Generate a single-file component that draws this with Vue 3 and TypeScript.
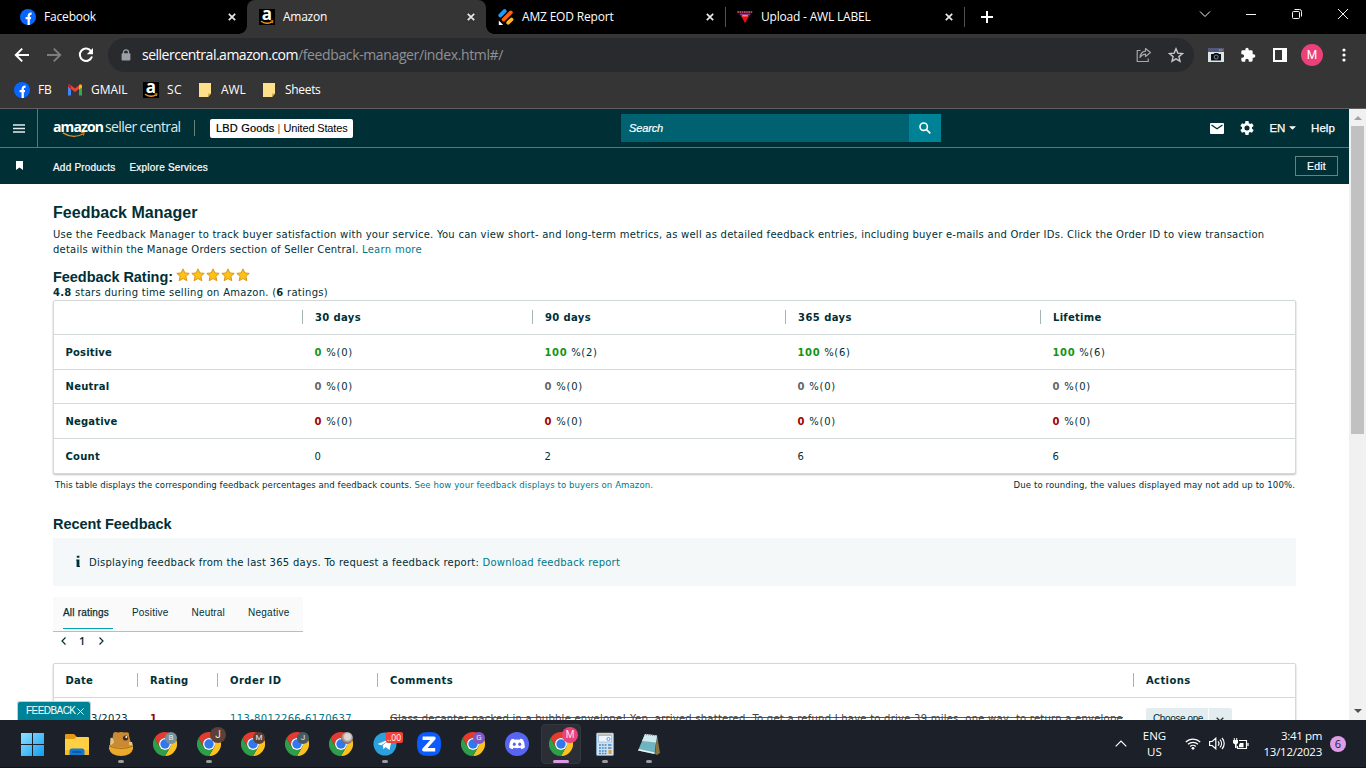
<script setup lang="ts">
import type { Directive } from 'vue'

// Tracks a single-line label so that it spans the given width in pixels.
const vFit: Directive<HTMLElement, number> = {
  mounted(el, { value }) {
    const count = (el.textContent ?? '').length
    const natural = el.getBoundingClientRect().width
    if (count > 0) el.style.letterSpacing = `${((value - natural) / count).toFixed(3)}px`
  },
}

interface Cell { value: string; rest: string; w: number }
interface MetricRow { label: string; w: number; tone: string; cells: Cell[] }

const metricHeads = [
  { label: '30 days', w: 46 },
  { label: '90 days', w: 46 },
  { label: '365 days', w: 54 },
  { label: 'Lifetime', w: 48.5 },
]
const zero = (): Cell => ({ value: '0', rest: ' %(0)', w: 38.5 })
const metricRows: MetricRow[] = [
  {
    label: 'Positive', w: 46.5, tone: 'good',
    cells: [zero(), { value: '100', rest: ' %(2)', w: 53 }, { value: '100', rest: ' %(6)', w: 53 }, { value: '100', rest: ' %(6)', w: 53 }],
  },
  { label: 'Neutral', w: 44, tone: 'mid', cells: [zero(), zero(), zero(), zero()] },
  { label: 'Negative', w: 52, tone: 'bad', cells: [zero(), zero(), zero(), zero()] },
  {
    label: 'Count', w: 34.5, tone: 'plain',
    cells: ['0', '2', '6', '6'].map((n) => ({ value: '', rest: n, w: 7 })),
  },
]

const ratingTabs = [
  { label: 'All ratings', w: 46 },
  { label: 'Positive', w: 36.5 },
  { label: 'Neutral', w: 33.5 },
  { label: 'Negative', w: 41.5 },
]

interface TaskApp { kind: string; badge?: string; tint?: string; size?: string; dot?: boolean; active?: boolean }
const apps: TaskApp[] = [
  { kind: 'windows' },
  { kind: 'folder' },
  { kind: 'hippo', dot: true },
  { kind: 'chrome', badge: 'B', tint: 'slate' },
  { kind: 'chrome', badge: 'J', tint: 'brown', size: 'big', dot: true },
  { kind: 'chrome', badge: 'M', tint: 'brown' },
  { kind: 'chrome', badge: 'J', tint: 'steel' },
  { kind: 'chrome', badge: ' ', tint: 'photo' },
  { kind: 'telegram', dot: true },
  { kind: 'zoom' },
  { kind: 'chrome', badge: 'G', tint: 'violet' },
  { kind: 'discord' },
  { kind: 'chrome', badge: 'M', tint: 'pink', size: 'big', active: true },
  { kind: 'calc', dot: true },
  { kind: 'notepad', dot: true },
]
</script>

<template>
  <div class="screen">
    <svg class="defs" width="0" height="0">
      <symbol id="fb" viewBox="0 0 16 16">
        <circle cx="8" cy="8" r="8" fill="#0866ff" />
        <path d="M8.700 16V7q0-2.600 2.900-2.400M5.600 9.200h5.400" fill="none" stroke="#fff" stroke-width="2.300" />
      </symbol>
      <symbol id="smile" viewBox="0 0 16 16">
        <path d="M2 12.200q6 3.800 11.400.6" fill="none" stroke="#f79a1c" stroke-width="1.300" />
        <path d="M11.400 12l2.700-.3-.7 2.400" fill="none" stroke="#f79a1c" stroke-width=".9" />
      </symbol>
      <symbol id="x" viewBox="0 0 8 8">
        <path d="M.8.8l6.400 6.400M7.200.8L.8 7.200" stroke="#e8e8e8" stroke-width="1.700" />
      </symbol>
      <symbol id="note" viewBox="0 0 12 14">
        <path d="M0 0h12v10.500L9 14H0z" fill="#ffe08a" />
        <path d="M12 10.500L9 14v-3.500z" fill="#d9ae3c" />
      </symbol>
      <symbol id="star" viewBox="0 0 14 14">
        <path d="M7 .9l1.800 4 4.400.5-3.300 2.900.9 4.400L7 10.500l-3.800 2.200.9-4.400L.8 5.400l4.400-.5z" fill="#ffc20e" stroke="#d8941c" stroke-width="1" stroke-linejoin="round" />
      </symbol>
      <symbol id="chrome" viewBox="0 0 24 24">
        <path d="M1.600 6A12 12 0 0 1 22.400 6H12a6 6 0 0 0-5.200 9z" fill="#e33b2e" />
        <path d="M22.400 6A12 12 0 0 1 12 24l5.200-9A6 6 0 0 0 12 6z" fill="#fcc31e" />
        <path d="M12 24A12 12 0 0 1 1.600 6l5.200 9a6 6 0 0 0 10.400 0z" fill="#2c9f48" />
        <circle cx="12" cy="12" r="6" fill="#fff" />
        <circle cx="12" cy="12" r="4.700" fill="#3078ee" />
      </symbol>
    </svg>

    <!-- Browser tab strip -->
    <div class="strip">
      <div class="tab t1">
        <svg class="fav"><use href="#fb" /></svg>
        <span v-fit="52" class="tl">Facebook</span>
        <svg class="close"><use href="#x" /></svg>
      </div>
      <div class="tab active">
        <span class="fav amz">a<svg><use href="#smile" /></svg></span>
        <span v-fit="44" class="tl">Amazon</span>
        <svg class="close"><use href="#x" /></svg>
      </div>
      <div class="tab">
        <svg class="fav" viewBox="0 0 16 16">
          <path d="M2.400 6.400l4.200-4.200" stroke="#1a9bff" stroke-width="4" stroke-linecap="round" />
          <path d="M5.600 10.600l7.200-7.200" stroke="#ff6110" stroke-width="3.800" stroke-linecap="round" />
          <path d="M10.200 13.700l3.300-3.200" stroke="#ffb62e" stroke-width="3.800" stroke-linecap="round" />
          <path d="M.8 11.500l4.400 4.500H.8z" fill="#fff" />
        </svg>
        <span v-fit="91.500" class="tl">AMZ EOD Report</span>
        <svg class="close"><use href="#x" /></svg>
      </div>
      <div class="tab ruled">
        <svg class="fav" viewBox="0 0 16 16">
          <path d="M0 2.500h16L8.300 14z" fill="#2a1020" />
          <path d="M.4 3h15.200" stroke="#e2556c" stroke-width="1.600" stroke-dasharray="1.600 .6" />
          <path d="M3 5.400h10" stroke="#8b3e8e" stroke-width="1.400" />
          <path d="M4 6.500h8L8 14z" fill="#f20d0d" />
          <path d="M5.200 6.800h5.600" stroke="#f4c9d6" stroke-width="1" />
        </svg>
        <span v-fit="109.500" class="tl">Upload - AWL LABEL</span>
        <svg class="close"><use href="#x" /></svg>
      </div>
      <div class="newtab">
        <svg width="12" height="12"><path d="M6 0v12M0 6h12" stroke="#fff" stroke-width="2" /></svg>
      </div>
      <div class="winbtns">
        <svg viewBox="0 0 12 12"><path d="M1 3.500l5 5 5-5" /></svg>
        <svg viewBox="0 0 12 12"><path d="M1 6.500h10" /></svg>
        <svg viewBox="0 0 12 12"><rect x="1.500" y="3.500" width="7" height="7" rx="1" /><path d="M3.500 1.500h5a2 2 0 0 1 2 2v5" /></svg>
        <svg viewBox="0 0 12 12"><path d="M1 1l10 10M11 1L1 11" /></svg>
      </div>
    </div>

    <!-- Address bar -->
    <div class="toolbar">
      <svg class="nav n1" viewBox="0 0 16 16"><path d="M15 8H2M8.200 1.600L1.800 8l6.400 6.400" /></svg>
      <svg class="nav n2" viewBox="0 0 16 16"><path d="M1 8h13M7.800 1.600L14.200 8l-6.400 6.400" /></svg>
      <svg class="nav n3" viewBox="0 0 16 16"><path d="M13.200 4.200A6.200 6.200 0 1 0 14 9.500" /><path class="fill" d="M15 1v6.200H8.800z" /></svg>
      <div class="omni">
        <svg class="lock" viewBox="0 0 10 12"><path d="M2.500 5V3a2.500 2.200 0 0 1 5 0v2" fill="none" stroke="#9aa0a6" stroke-width="1.300" /><rect x=".6" y="4.200" width="8.800" height="7.400" rx="1" fill="#9aa0a6" /></svg>
        <span class="url"><span v-fit="156" class="host">sellercentral.amazon.com</span><span v-fit="205" class="path">/feedback-manager/index.html#/</span></span>
        <svg class="share" viewBox="0 0 16 16"><path d="M4.500 3.500H1.200v11h11V11.500M9.500 1.500l5 4-5 4V7.200Q6 7.200 4 10.500q.5-5.700 5.500-6.300z" /></svg>
        <svg class="fave" viewBox="0 0 16 16"><path d="M8 1.800l1.800 4.300 4.700.4-3.600 3.100 1.100 4.600L8 11.800l-4 2.400 1.100-4.600L1.500 6.500l4.700-.4z" /></svg>
      </div>
      <svg class="ext cam" viewBox="0 0 16 14"><rect width="16" height="14" fill="#dbe6e8" /><rect width="16" height="4" fill="#55587a" /><path d="M11 1h1.500v2H11z" fill="#3cb0a0" /><path d="M13 1h1.500v2H13z" fill="#e1523d" /><path d="M3 6h2.500l1-1h3.500l1 1h2v6.500H3z" fill="#0c1215" /><circle cx="8.200" cy="9" r="2" fill="none" stroke="#9ba7aa" stroke-width=".8" /></svg>
      <svg class="ext puz" viewBox="0 0 24 24"><path fill="#fff" d="M20.500 11H19V7a2 2 0 0 0-2-2h-4V3.500a2.500 2.500 0 0 0-5 0V5H4a2 2 0 0 0-2 2v3.800h1.500a2.700 2.700 0 0 1 0 5.400H2V20a2 2 0 0 0 2 2h3.800v-1.500a2.700 2.700 0 0 1 5.400 0V22H17a2 2 0 0 0 2-2v-4h1.500a2.500 2.500 0 0 0 0-5z" /></svg>
      <svg class="ext side" viewBox="0 0 14 14"><path fill="#fff" fill-rule="evenodd" d="M0 0h14v14H0zM2 2v10h7V2z" /></svg>
      <span class="avatar">M</span>
      <svg class="dots" viewBox="0 0 4 14"><circle cx="2" cy="2" r="1.600" /><circle cx="2" cy="7" r="1.600" /><circle cx="2" cy="12" r="1.600" /></svg>
    </div>

    <div class="marks">
      <span class="mk m1"><svg><use href="#fb" /></svg><span v-fit="13.500">FB</span></span>
      <span class="mk m2"><svg viewBox="0 0 16 16"><path d="M1 4v9.500h3V7z" fill="#4285f4" /><path d="M15 4v9.500h-3V7z" fill="#34a853" /><path d="M1 4.500V4q0-2 2-1.500l5 4 5-4q2-.500 2 1.500v.5L8 10z" fill="#ea4335" /><path d="M12 3.300l1-.8q2-.500 2 1.500v1.500L12 7.500z" fill="#fbbc04" /><path d="M1 4.500L4 7V3.300L3 2.500Q1 2 1 4z" fill="#c5221f" /></svg><span v-fit="36.500">GMAIL</span></span>
      <span class="mk m3"><span class="amz">a<svg><use href="#smile" /></svg></span><span v-fit="15">SC</span></span>
      <span class="mk m4"><svg class="nt"><use href="#note" /></svg><span v-fit="24.500">AWL</span></span>
      <span class="mk m5"><svg class="nt"><use href="#note" /></svg><span v-fit="35.500">Sheets</span></span>
    </div>

    <!-- Page viewport -->
    <div class="view">
      <div class="page">
        <header class="top">
          <div class="burger"><svg width="12" height="9"><path d="M0 1h12M0 4.500h12M0 8h12" stroke="#e6eded" stroke-width="1.700" /></svg></div>
          <div class="brand">
            <span v-fit="50" class="amazon">amazon</span><span v-fit="75.500" class="sc">seller central</span>
            <svg class="smile" viewBox="0 0 28 7"><path d="M1 1q12 7.500 24 1" fill="none" stroke="#f08a1d" stroke-width="1.500" /><path d="M22 .8l4-.2-1 3.600" fill="none" stroke="#f08a1d" stroke-width="1.100" /></svg>
          </div>
          <span class="bar"></span>
          <button class="store"><span v-fit="58.500" class="strong">LBD Goods</span><i>|</i><span v-fit="64">United States</span></button>
          <div class="search"><span class="field"><span v-fit="34">Search</span></span><span class="go"><svg viewBox="0 0 12 12"><circle cx="4.700" cy="4.700" r="3.700" fill="none" stroke="#fff" stroke-width="1.600" /><path d="M7.300 7.300l4 4" stroke="#fff" stroke-width="1.700" /></svg></span></div>
          <svg class="mail" viewBox="0 0 14 11"><rect width="14" height="11" rx="1" fill="#fff" /><path d="M1.500 2L7 5.700 12.500 2" fill="none" stroke="#002f36" stroke-width="1.300" /></svg>
          <svg class="gear" viewBox="0 0 24 24"><path fill="#fff" d="M19.400 13a7.500 7.500 0 0 0 0-2l2.600-2-2.500-4.300-3 1.200a8 8 0 0 0-1.700-1L14.300 1.500H9.700L9.200 4.900a8 8 0 0 0-1.700 1l-3-1.200L2 9l2.600 2a7.500 7.500 0 0 0 0 2L2 15l2.500 4.300 3-1.200a8 8 0 0 0 1.700 1l.5 3.400h4.600l.5-3.400a8 8 0 0 0 1.700-1l3 1.200L22 15zM12 15.800a3.800 3.800 0 1 1 0-7.600 3.800 3.800 0 0 1 0 7.600z" /></svg>
          <span v-fit="15.500" class="lang">EN</span>
          <svg class="caret" viewBox="0 0 8 4"><path d="M0 0h8L4 4z" fill="#fff" /></svg>
          <span v-fit="24" class="help">Help</span>
        </header>
        <nav class="sub">
          <svg class="flag" viewBox="0 0 7 9"><path d="M0 0h7v9L3.500 6.500 0 9z" fill="#fff" /></svg>
          <span v-fit="62.500" class="s1">Add Products</span>
          <span v-fit="78.500" class="s2">Explore Services</span>
          <button class="edit"><span v-fit="19">Edit</span></button>
        </nav>

        <main class="body">
          <h1><span v-fit="144.500">Feedback Manager</span></h1>
          <p class="lead">
            <span v-fit="1211.500">Use the Feedback Manager to track buyer satisfaction with your service. You can view short- and long-term metrics, as well as detailed feedback entries, including buyer e-mails and Order IDs. Click the Order ID to view transaction</span><br>
            <span v-fit="309">details within the Manage Orders section of Seller Central.&nbsp;</span><a v-fit="60">Learn more</a>
          </p>
          <div class="rating">
            <h2><span v-fit="120">Feedback Rating:</span></h2>
            <svg v-for="n in 5" :key="n" class="star"><use href="#star" /></svg>
          </div>
          <p class="stars"><span v-fit="275"><b>4.8</b> stars during time selling on Amazon. (<b>6</b> ratings)</span></p>

          <div class="card metrics">
            <div class="row head">
              <span class="c0"></span>
              <span v-for="h in metricHeads" :key="h.label" class="c"><b v-fit="h.w">{{ h.label }}</b></span>
            </div>
            <div v-for="r in metricRows" :key="r.label" class="row" :class="r.tone">
              <span class="c0"><b v-fit="r.w">{{ r.label }}</b></span>
              <span v-for="(c, i) in r.cells" :key="i" class="c"><span v-fit="c.w"><b>{{ c.value }}</b>{{ c.rest }}</span></span>
            </div>
          </div>
          <div class="foot">
            <span v-fit="359.500">This table displays the corresponding feedback percentages and feedback counts.&nbsp;</span>
            <a v-fit="238.500">See how your feedback displays to buyers on Amazon.</a>
            <span v-fit="281.500" class="right">Due to rounding, the values displayed may not add up to 100%.</span>
          </div>

          <h2 class="recent"><span v-fit="118.500">Recent Feedback</span></h2>
          <div class="info">
            <svg width="4" height="13" viewBox="0 0 4 13"><path d="M.8.800h2.600v2H.8zM.2 4.500h3.200V11H4v1H.600v-6.300H.2z" fill="#002f36" /></svg>
            <span v-fit="393.500">Displaying feedback from the last 365 days. To request a feedback report:&nbsp;</span><a v-fit="137.500">Download feedback report</a>
          </div>
          <div class="tabs">
            <span v-for="(t, i) in ratingTabs" :key="t.label" class="rt" :class="['r' + i, { on: i === 0 }]"><span v-fit="t.w">{{ t.label }}</span></span>
          </div>
          <div class="pager">
            <svg viewBox="0 0 5 8"><path d="M4.500.5L1 4l3.500 3.500" /></svg>
            <span>1</span>
            <svg viewBox="0 0 5 8"><path d="M.5.5L4 4 .5 7.500" /></svg>
          </div>

          <div class="card entries">
            <div class="row head">
              <span class="e0"><b v-fit="27.500">Date</b></span>
              <span class="e"><b v-fit="38.500">Rating</b></span>
              <span class="e"><b v-fit="51.500">Order ID</b></span>
              <span class="e"><b v-fit="63">Comments</b></span>
              <span class="e"><b v-fit="44.500">Actions</b></span>
            </div>
            <div class="row entry">
              <span class="e0 date"><span v-fit="37">3/2023</span></span>
              <span class="e low"><b>1</b></span>
              <span class="e"><a v-fit="122">113-8012266-6170637</a></span>
              <span class="e"><s v-fit="733">Glass decanter packed in a bubble envelope! Yep, arrived shattered. To get a refund I have to drive 39 miles, one way, to return a envelope</s></span>
              <span class="e">
                <span class="choose"><span class="ch"><span v-fit="50">Choose one</span></span><svg viewBox="0 0 8 5"><path d="M.7.7L4 4 7.300.7" /></svg></span>
              </span>
            </div>
          </div>
        </main>
        <div class="fbtn"><span v-fit="49.500">FEEDBACK</span><svg viewBox="0 0 7 7"><path d="M.5.5l6 6M6.500.5l-6 6" stroke="#fff" stroke-width="1" /></svg></div>
      </div>
      <div class="scroll">
        <svg class="up" viewBox="0 0 8 4"><path d="M0 4h8L4 0z" fill="#a3a3a3" /></svg>
        <span class="thumb"></span>
        <svg class="down" viewBox="0 0 8 4"><path d="M0 0h8L4 4z" fill="#505050" /></svg>
      </div>
    </div>

    <!-- Taskbar -->
    <footer class="task">
      <div v-for="(a, i) in apps" :key="i" class="app" :class="{ act: a.active, dot: a.dot }">
        <svg v-if="a.kind === 'windows'" viewBox="0 0 24 24">
          <defs><linearGradient id="wg" x1="0" y1="0" x2="1" y2="1"><stop offset="0" stop-color="#8fe2ff" /><stop offset="1" stop-color="#119cf3" /></linearGradient></defs>
          <path d="M0 1h11v11H0zM12 1h11v11H12zM0 13h11v11H0zM12 13h11v11H12z" fill="url(#wg)" />
        </svg>
        <svg v-else-if="a.kind === 'folder'" viewBox="0 0 24 24">
          <path d="M0 3q0-1 1-1h8l3 3h10v5H0z" fill="#e39a12" />
          <path d="M0 7h9l2.500-2H23q1 0 1 1v16q0 1-1 1H1q-1 0-1-1z" fill="#ffd044" />
          <path d="M0 21v-3h24v4q0 1-1 1H1q-1 0-1-1z" fill="#f7bb2a" />
          <path d="M4.500 23v-4q0-2.500 2.500-2.500h10q2.500 0 2.500 2.500v4z" fill="#1378d1" />
          <path d="M8 20h8" stroke="#0b4f98" stroke-width="1.500" stroke-linecap="round" />
        </svg>
        <svg v-else-if="a.kind === 'hippo'" viewBox="0 0 24 24">
          <path d="M4 3q0-4 5-2.500l3-.5 4 .5q5-1 4 3.500l2 7q2 3-1 5H2q-2-3 1-7z" fill="#c98a32" />
          <circle cx="16.500" cy="6" r="2.600" fill="#4a2a14" /><circle cx="17.300" cy="5" r="1" fill="#fff" />
          <path d="M1.500 6q3-1 3.500 4.500Q3 13 1 13z" fill="#d9c98c" /><path d="M20 10h3l1 4-4-1z" fill="#d9c98c" />
          <path d="M0 13q12 5 24 0v4q-2 7-12 7T0 17z" fill="#eaa92a" />
          <path d="M0 14q12 5 24 0" fill="none" stroke="#a86c14" />
        </svg>
        <svg v-else-if="a.kind === 'chrome'"><use href="#chrome" /></svg>
        <svg v-else-if="a.kind === 'telegram'" viewBox="0 0 24 24">
          <circle cx="12" cy="12" r="11.500" fill="#2aa0dc" />
          <path d="M4.500 12L19 6.300 16.500 18l-4-3-2 2.300-.8-4L16 8.300l-7.800 4.900z" fill="#fff" />
        </svg>
        <svg v-else-if="a.kind === 'zoom'" viewBox="0 0 24 24">
          <path d="M12 0c9 0 12 3 12 12s-3 12-12 12S0 21 0 12 3 0 12 0z" fill="#0b5cff" />
          <path d="M5.600 6.300h11.400L6.800 17.700h11.400" fill="none" stroke="#fff" stroke-width="3.400" stroke-linejoin="round" />
        </svg>
        <svg v-else-if="a.kind === 'discord'" viewBox="0 0 24 24">
          <circle cx="12" cy="12" r="12" fill="#5865f2" />
          <path d="M8.500 6.800l1.200.9q2.300-.4 4.600 0l1.200-.9q1.500.2 2.600 1 2 3.500 1.800 7.800-1.600 1.300-3.500 1.600l-.9-1.500q-3.500.9-7 0l-.9 1.500q-1.900-.3-3.500-1.600Q3.900 11.300 5.900 7.800q1.100-.8 2.600-1z" fill="#fff" />
          <ellipse cx="9.300" cy="12.300" rx="1.500" ry="1.700" fill="#5865f2" /><ellipse cx="14.700" cy="12.300" rx="1.500" ry="1.700" fill="#5865f2" />
        </svg>
        <svg v-else-if="a.kind === 'calc'" viewBox="0 0 24 24">
          <rect x="3.500" y="1" width="17" height="22.500" rx="1" fill="#cfe3f3" stroke="#86b2d6" stroke-width=".6" />
          <rect x="5.500" y="3" width="13" height="7" fill="#eef6fc" stroke="#86a9c8" stroke-width=".6" />
          <path d="M5.500 3.200h13" stroke="#e8a33a" /><circle cx="15.500" cy="7" r="1.600" fill="none" stroke="#4a86bd" stroke-width=".8" />
          <path d="M6 13h7.500M6 16h7.500M6 19h7.500M6 21.500h7.500" stroke="#4788c2" stroke-width="1.600" stroke-dasharray="1.900 .9" />
          <path d="M15 13h3.500M15 16h3.500" stroke="#4788c2" stroke-width="1.600" /><path d="M15.500 18h3v4h-3z" fill="#e99a2c" />
        </svg>
        <svg v-else viewBox="0 0 24 24">
          <path d="M20 3l3 18-3 2-2-1z" fill="#8a7442" />
          <path d="M8 2l12 1.500-2.500 18.500L1 18.500z" fill="#6fb4c0" />
          <path d="M8 2l12 1.500-1 7L5 9z" fill="#cfe9ec" />
          <path d="M1 18.500l16.500 3.500.2-1.500L2 17z" fill="#e8f2f3" />
          <path d="M9 2.500l10.500 1.200" stroke="#888" stroke-width="1.300" stroke-dasharray="1 1" />
        </svg>
        <span v-if="a.badge" class="bdg" :class="[a.tint, a.size]">{{ a.badge }}</span>
        <span v-if="a.kind === 'telegram'" class="alert">..00</span>
      </div>
      <div class="tray">
        <svg class="chev" viewBox="0 0 12 7"><path d="M.7 6.300L6 1l5.300 5.300" /></svg>
        <span class="two lang2"><span v-fit="23.500">ENG</span><span v-fit="15">US</span></span>
        <svg class="wifi" viewBox="0 0 16 13"><path d="M.8 5a10.300 10.300 0 0 1 14.400 0M3 7.300a7.200 7.200 0 0 1 10 0M5.200 9.500a4 4 0 0 1 5.600 0" /><circle cx="8" cy="11.300" r="1.400" class="solid" /></svg>
        <svg class="vol" viewBox="0 0 16 13"><path d="M.6 4.500h2.600L6.800 1.200v10.600L3.200 8.500H.6zM9 4.300a3.200 3.200 0 0 1 0 4.400M11 2.700a5.600 5.600 0 0 1 0 7.600M13 1a8 8 0 0 1 0 11" /></svg>
        <svg class="bat" viewBox="0 0 16 12"><path d="M6 2.500h7.500v8h-9V8M15 5v3" /><path class="solid" d="M7 5h3.500v4.300H6V7z" /><path class="solid" d="M0 2h5v3L3.600 6.500V10H2V6.500L0 5zM.8 0h1v2h-1zM3.200 0h1v2h-1z" /></svg>
        <span class="two clock"><span v-fit="41">3:41 pm</span><span v-fit="58.500">13/12/2023</span></span>
        <span class="count">6</span>
      </div>
    </footer>
  </div>
</template>

<style>
html, body { overflow: hidden; background: #fff; }
</style>

<style scoped>
* { box-sizing: border-box; }
.screen { width: 1366px; height: 768px; display: flex; flex-direction: column; overflow: hidden; font-family: "Open Sans", "Noto Sans", sans-serif; color: #fff; }
.defs { position: absolute; }
svg { display: block; flex: none; }
span, b, a, s { white-space: nowrap; }
.tl, b, a, s { display: inline-block; }

.strip { height: 34px; flex: none; background: #000; display: flex; }
.tab { width: 239px; height: 34px; display: flex; align-items: center; padding-left: 12px; position: relative; font-size: 12px; }
.t1 { width: 247px; padding-left: 20px; }
.tab.active { background: #353535; border-radius: 8px 8px 0 0; }
.tab.active::before, .tab.active::after { content: ""; position: absolute; bottom: 0; width: 8px; height: 8px; }
.tab.active::before { left: -8px; background: radial-gradient(circle at 0 0, transparent 7.500px, #353535 8px); }
.tab.active::after { right: -8px; background: radial-gradient(circle at 100% 0, transparent 7.500px, #353535 8px); }
.ruled::before, .newtab::before { content: ""; position: absolute; left: 0; top: 7px; width: 1px; height: 20px; background: #505050; }
.fav { width: 16px; height: 16px; margin-right: 8px; flex: none; }
.amz { position: relative; width: 16px; height: 16px; background: #000; color: #fff; text-align: center; font: 700 17px/9px "Open Sans", sans-serif; flex: none; }
.amz svg { position: absolute; left: 0; top: 0; width: 16px; height: 16px; }
.tl { line-height: 16px; }
.close { width: 8px; height: 8px; margin-left: auto; margin-right: 11px; }
.newtab { position: relative; padding: 11px 0 0 17px; }
.winbtns { margin-left: auto; display: flex; gap: 34px; padding: 8px 17px 0 0; }
.winbtns svg { width: 12px; height: 12px; fill: none; stroke: #f4f4f4; stroke-width: 1; }

.toolbar { height: 42px; flex: none; background: #353535; display: flex; align-items: center; }
.nav { width: 16px; height: 16px; fill: none; stroke: #fff; stroke-width: 2; }
.n1 { margin-left: 14px; }
.n2 { margin-left: 16px; stroke: #7d7d7d; }
.n3 { margin-left: 16px; stroke: #fff; }
.n3 .fill { fill: #fff; stroke: none; }
.omni { margin-left: 14px; width: 1086px; height: 34px; border-radius: 17px; background: #282a2e; display: flex; align-items: center; }
.lock { width: 10px; height: 12px; margin-left: 13px; margin-top: -1px; }
.url { margin-left: 11px; font-size: 14px; line-height: 20px; display: flex; }
.host { color: #fff; }
.path { color: #8f9296; }
.share { width: 16px; height: 16px; margin-left: auto; fill: none; stroke: #a5a7a9; stroke-width: 1.200; stroke-linejoin: round; }
.fave { width: 16px; height: 16px; margin: 0 10px 0 16px; fill: none; stroke: #c6c7c9; stroke-width: 1.400; }
.cam { width: 16px; height: 14px; margin-left: 14px; }
.puz { width: 16px; height: 16px; margin-left: 16px; }
.side { width: 14px; height: 14px; margin-left: 17px; }
.avatar { width: 22px; height: 22px; border-radius: 50%; background: #ec407a; margin-left: 14px; text-align: center; font: 12px/22px Roboto, sans-serif; }
.dots { width: 4px; height: 14px; margin-left: 19px; fill: #fff; }

.marks { height: 33px; flex: none; background: #353535; border-bottom: 1px solid #606060; display: flex; align-items: center; font-size: 12px; padding-bottom: 5px; }
.mk { display: flex; align-items: center; gap: 8px; line-height: 16px; }
.mk svg { width: 16px; height: 16px; }
.mk .nt { width: 12px; height: 14px; }
.m1 { margin-left: 14px; }
.m2 { margin-left: 15.500px; }
.m3 { margin-left: 15.500px; }
.m4 { margin-left: 17px; gap: 10px; }
.m5 { margin-left: 17.500px; gap: 10px; }

.view { height: 611px; flex: none; display: flex; background: #fff; overflow: hidden; }
.page { width: 1349px; height: 611px; position: relative; overflow: hidden; color: #002f36; }
.top { height: 39px; background: #002f36; border-bottom: 1px solid #55787b; color: #fff; display: flex; align-items: center; font: 11px/14px "Liberation Sans", Arial, sans-serif; }
.burger { width: 38px; height: 38px; border-right: 1px solid #55787b; display: flex; align-items: center; justify-content: center; flex: none; }
.brand { position: relative; width: 128px; height: 20px; margin-left: 15px; display: flex; align-items: baseline; font: 14px/18px "Open Sans", sans-serif; margin-top: -1px; }
.amazon { font-weight: 700; font-size: 14px; }
.sc { margin-left: 2px; color: #dfe8e8; }
.smile { position: absolute; left: 7px; top: 14px; width: 28px; height: 6px; }
.bar { width: 1px; height: 16px; background: #65827f; margin-left: 13px; }
.store { width: 143px; height: 19px; margin-left: 15px; padding: 0 0 0 6px; border: 0; border-radius: 2px; background: #fff; color: #000; display: flex; align-items: center; font: 11px/14px "Liberation Sans", Arial, sans-serif; }
.store .strong { -webkit-text-stroke: .2px #000; }
.store i { font-style: normal; color: #a2552c; margin: 0 3px; width: 3px; }
.search { width: 320px; height: 28px; display: flex; margin-left: 268px; }
.field { width: 288px; background: #006170; padding: 7px 8px; font-style: italic; -webkit-text-stroke: .2px #fff; }
.go { width: 32px; background: #008296; display: flex; align-items: center; justify-content: center; }
.go svg { width: 12px; height: 12px; }
.mail { width: 14px; height: 11px; margin-left: 269px; }
.gear { width: 16px; height: 16px; margin-left: 15px; }
.lang, .help { font-size: 11.500px; -webkit-text-stroke: .25px #fff; }
.lang { margin-left: 14.500px; }
.caret { width: 7px; height: 4px; margin-left: 4px; }
.help { margin-left: 15px; }
.sub { height: 36px; background: #002f36; color: #fff; display: flex; align-items: center; font: 10px/14px "Liberation Sans", Arial, sans-serif; -webkit-text-stroke: .2px #fff; }
.flag { width: 7px; height: 9px; margin: -1px 0 0 16px; }
.s1 { margin-left: 30px; margin-top: 3px; }
.s2 { margin-left: 14px; margin-top: 3px; }
.edit { width: 43px; height: 20px; margin-left: auto; margin-right: 11px; background: transparent; border: 1px solid #65827f; color: #fff; padding: 0; font: 10.500px/16px "Liberation Sans", Arial, sans-serif; }

.body { padding: 20px 53px 0; font: 10px/15px "DejaVu Sans", Verdana, sans-serif; }
h1, h2 { margin: 0; font: bold 16px/18px "Liberation Sans", Arial, sans-serif; display: flex; }
h2 { font-size: 14.500px; }
p { margin: 0; }
a { color: #00788a; }
.lead { margin-top: 5px; height: 30px; white-space: nowrap; }
.lead span { display: inline-block; }
.rating { display: flex; margin-top: 11px; height: 18px; }
.rating h2 { margin-right: 1.500px; width: 121px; }
.star { width: 14px; height: 14px; margin: 0 1.200px 0 0; }
.stars { display: flex; margin-top: -1px; height: 14px; }
.stars b, .row .c span b { display: inline; }
.card { border: 1px solid #d3d9d9; border-radius: 2px; box-shadow: 0 1px 2px rgba(0, 0, 0, .25); background: #fff; }
.metrics { margin-top: 1px; height: 174px; }
.row { display: grid; align-items: center; height: 34.600px; border-top: 1px solid #d3d9d9; }
.metrics .row { grid-template-columns: 248px 230px 253px 255px 1fr; }
.metrics .row:not(.head) { padding-top: 1px; }
.row.head { border-top: 0; height: 33px; }
.c0, .e0 { padding-left: 11.500px; }
.c, .e { padding-left: 13px; }
.metrics .row:not(.head) .c { padding-left: 12.500px; }
.head .c, .head .e { border-left: 1px solid #a5b5b5; padding-left: 12px; height: 14px; display: flex; align-items: center; margin-top: -2px; }
.head .c b, .head .e b { margin-top: 2px; }
.c > span { display: inline-block; }
.good .c b { color: #129612; }
.mid .c b { color: #666; }
.bad .c b { color: #a00000; }
.foot { display: flex; margin-top: 3px; padding: 0 1px 0 2px; font-family: "DejaVu Sans Condensed", "DejaVu Sans", sans-serif; font-size: 9.500px; height: 15px; }
.foot .right { margin-left: auto; }
.recent { margin-top: 23px; }
.info { margin-top: 5px; height: 48px; background: #f4f8f9; display: flex; align-items: center; padding-left: 22.500px; }
.info svg { margin-right: 9.500px; margin-top: -1px; }
.tabs { margin-top: 11px; width: 250px; height: 35px; background: #fafafa; border-bottom: 1px solid #bcbcbc; display: flex; font: 10px/15px "Liberation Sans", Arial, sans-serif; padding: 8px 0 0 10px; }
.rt { height: 24px; }
.r0 { width: 50px; -webkit-text-stroke: .25px #002f36; border-bottom: 1px solid #00a4b4; }
.r1 { margin-left: 19px; }
.r2 { margin-left: 23px; }
.r3 { margin-left: 23px; }
.pager { display: flex; align-items: center; height: 18px; padding-left: 7.500px; gap: 13.500px; font: 600 11px/18px "Open Sans", sans-serif; }
.pager svg { width: 5px; height: 8px; fill: none; stroke: #002f36; stroke-width: 1.200; }
.entries { margin-top: 13px; height: 200px; }
.entries .row { grid-template-columns: 83px 80px 160px 756px 1fr; }
.entry { height: 42px; }
.date { padding-left: 37px; }
.date span { display: inline-block; }
.low b { color: #a00000; }
.entry s { color: #444; text-decoration: none; background: linear-gradient(#555, #555) 0 6px / 100% 1px no-repeat; }
.choose { display: flex; width: 86px; height: 22px; background: #e3ecee; border-radius: 2px; font: 10px/22px "Liberation Sans", Arial, sans-serif; }
.ch { width: 63px; padding-left: 7px; border-right: 1px solid #f8fbfb; }
.choose svg { width: 8px; height: 5px; margin: 9px 0 0 7px; fill: none; stroke: #333; stroke-width: 1.400; }
.fbtn { position: absolute; left: 17px; bottom: 0; width: 74px; height: 19px; background: #008296; border: 1px solid #b8d3d8; border-bottom: 0; border-radius: 3px 3px 0 0; color: #fff; display: flex; align-items: center; padding-left: 8px; font: 10px/14px "Liberation Sans", Arial, sans-serif; }
.fbtn svg { width: 7px; height: 7px; margin-left: 1.500px; }
.scroll { width: 17px; height: 611px; background: #f1f1f1; display: flex; flex-direction: column; align-items: center; }
.up { width: 8px; height: 4px; margin: 7px 0 6px; }
.thumb { width: 13px; height: 308px; background: #c1c1c1; }
.down { width: 8px; height: 4px; margin: auto 0 7px; }

.task { height: 48px; flex: none; background: #1c2028; border-bottom: 1px solid #17101a; display: flex; align-items: center; padding-left: 13px; }
.app { width: 40px; height: 40px; margin-right: 4px; display: flex; align-items: center; justify-content: center; position: relative; border-radius: 4px; }
.app > svg { width: 24px; height: 24px; }
.act { background: #2b2e35; border: 1px solid #34373e; }
.dot::after, .act::after { content: ""; position: absolute; bottom: 1px; left: 17px; width: 6px; height: 3px; border-radius: 2px; background: #999b9f; }
.act::after { left: 11px; width: 16px; bottom: 0; background: #dc9ae6; }
.bdg { position: absolute; left: 20px; top: 8px; width: 12px; height: 12px; border-radius: 50%; text-align: center; font: 8px/12px Roboto, sans-serif; color: #e8e8e8; }
.big { left: 21px; top: 3px; width: 16px; height: 16px; font-size: 10px; line-height: 16px; }
.act .big { left: 20px; top: 2px; }
.slate { background: #78909c; }
.brown { background: #5d4037; }
.steel { background: #455a64; }
.violet { background: #7e57c2; }
.pink { background: #ec407a; }
.photo { background: radial-gradient(circle at 55% 40%, #e0d4d0 0 30%, #8c7c78 60%, #4d4545); }
.alert { position: absolute; left: 20.500px; top: 8px; width: 17px; height: 11px; border-radius: 2px; background: #f23f3a; font: 8.500px/11px "Open Sans", sans-serif; text-align: center; }
.tray { margin-left: auto; display: flex; align-items: center; font-size: 11.500px; }
.tray svg { fill: none; stroke: #fff; stroke-width: 1.200; }
.tray .solid { fill: #fff; stroke: none; }
.chev { width: 12px; height: 7px; }
.two { display: flex; flex-direction: column; line-height: 16px; margin-top: 1px; }
.lang2 { margin-left: 16px; width: 24px; align-items: center; }
.wifi { width: 16px; height: 13px; margin-left: 18px; }
.vol { width: 16px; height: 13px; margin-left: 8px; }
.bat { width: 16px; height: 12px; margin-left: 8px; }
.clock { margin-left: 15px; align-items: flex-end; }
.count { width: 16px; height: 16px; border-radius: 50%; background: #df9de8; color: #222; font: 11px/16px "Open Sans", sans-serif; text-align: center; margin: 0 20px 0 8px; }
</style>
